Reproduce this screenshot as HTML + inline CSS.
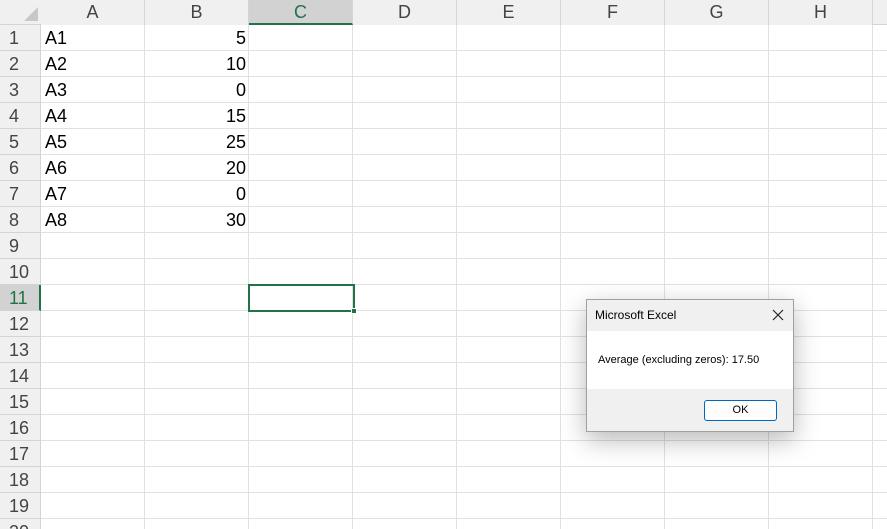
<!DOCTYPE html><html><head><style>
html,body{margin:0;width:887px;height:529px;overflow:hidden}
body{background:#fff;font-family:"Liberation Sans","Noto Sans CJK JP",sans-serif;position:relative}
.a{position:absolute;box-sizing:border-box}
.h{background:#f0f0f0;color:#444;font-size:18px;text-align:center;line-height:24px}
.t{font-size:18px;color:#000;line-height:26px}
</style></head><body>
<div id="g"></div>
<script>
let s='';
s+='<div class="a h" style="left:0;top:0;width:887px;height:25px;border-bottom:1px solid #d4d4d4"></div>';
s+='<div class="a h" style="left:0;top:25px;width:41px;height:504px;border-right:1px solid #d4d4d4"></div>';
s+='<div class="a" style="left:24px;top:7px;width:0;height:0;border-left:14px solid transparent;border-bottom:14px solid #c8c8c8"></div>';
const cols='ABCDEFGH';
for(let i=0;i<8;i++){let x=41+i*104;
 let sel=i==2;
 s+=`<div class="a h" style="left:${x}px;top:0;width:104px;height:25px;border-right:1px solid #d4d4d4;${sel?'background:#d2d2d2;color:#217346;border-bottom:2px solid #217346;':''}">${cols[i]}</div>`;
 s+=`<div class="a" style="left:${x+103}px;top:25px;width:1px;height:504px;background:#e1e1e1"></div>`;
}
for(let r=1;r<=20;r++){let y=25+(r-1)*26;
 let sel=r==11;
 s+=`<div class="a h" style="left:0;top:${y}px;width:41px;height:26px;line-height:26px;text-align:left;padding-left:9px;border-bottom:1px solid #d4d4d4;${sel?'background:#d2d2d2;color:#217346;border-right:2px solid #217346;':'border-right:1px solid #d4d4d4;'}">${r}</div>`;
 s+=`<div class="a" style="left:41px;top:${y+25}px;width:846px;height:1px;background:#e1e1e1"></div>`;
}
const v=[5,10,0,15,25,20,0,30];
for(let i=0;i<8;i++){let y=25+i*26;
 s+=`<div class="a t" style="left:45px;top:${y}px">A${i+1}</div>`;
 s+=`<div class="a t" style="left:145px;top:${y}px;width:101px;text-align:right">${v[i]}</div>`;
}
s+='<div class="a" style="left:248px;top:284px;width:107px;height:28px;border:2px solid #217346"></div>';
s+='<div class="a" style="left:351px;top:308px;width:6px;height:6px;background:#217346;border:1px solid #fff"></div>';
document.getElementById('g').innerHTML=s;
</script>
<div class="a" style="left:586px;top:299px;width:208px;height:133px;border:1px solid #a0a0a0;background:#f0f0f0;box-shadow:0 8px 24px rgba(0,0,0,.28)">
 <div class="a" style="left:8px;top:8px;font-size:12px;color:#000">Microsoft Excel</div>
 <svg class="a" style="left:185px;top:9px" width="12" height="12"><path d="M1 1L11 11M11 1L1 11" stroke="#222" stroke-width="1.2"/></svg>
 <div class="a" style="left:0;top:31px;width:206px;height:58px;background:#fff"></div>
 <div class="a" style="left:11px;top:54px;font-size:11px;color:#000">Average (excluding zeros): 17.50</div>
 <div class="a" style="left:117px;top:100px;width:73px;height:21px;border:1px solid #0067c0;border-radius:3px;background:#fdfdfd;font-size:11px;text-align:center;line-height:19px">OK</div>
</div>
</body></html>
